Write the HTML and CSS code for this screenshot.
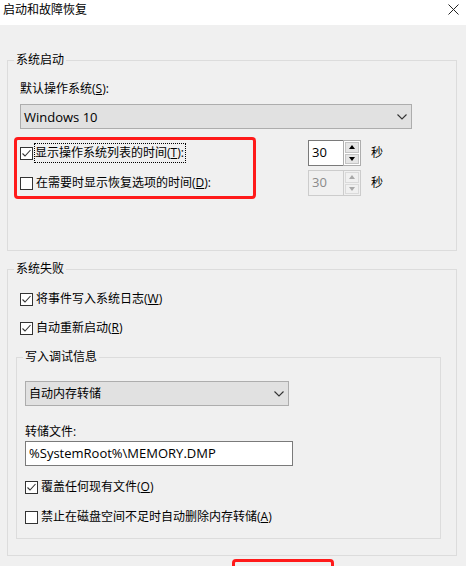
FILE: index.html
```html
<!DOCTYPE html>
<html lang="zh-CN">
<head>
<meta charset="utf-8">
<title>启动和故障恢复</title>
<link rel="stylesheet" href="styles.css">
</head>
<body>
<div class="titlebar">
  <span class="title">启动和故障恢复</span>
  <svg class="close" width="11" height="11" viewBox="0 0 11 11"><path d="M0.5 0.5L10.5 10.5M10.5 0.5L0.5 10.5" stroke="#222" stroke-width="1" fill="none"/></svg>
</div>
<div class="content">
  <fieldset class="group g1">
    <legend>系统启动</legend>
    <div class="label l-os">默认操作系统(<u>S</u>):</div>
    <div class="select sel-os"><span>Windows 10</span><svg class="chev" width="10" height="6" viewBox="0 0 10 6"><path d="M0.5 0.5L5 5L9.5 0.5" stroke="#333" stroke-width="1.1" fill="none"/></svg></div>
    <div class="timeouts">
      <div class="highlight">
        <div class="row trow">
          <span class="cb"><svg width="13" height="13" viewBox="0 0 13 13"><rect x="0.5" y="0.5" width="12" height="12" fill="#fff" stroke="#333"/><path d="M2.5 6.5L5 9L10.5 3" stroke="#333" stroke-width="1.1" fill="none"/></svg></span>
          <span class="text focus">显示操作系统列表的时间(<u>T</u>):</span>
        </div>
        <div class="row trow">
          <span class="cb"><svg width="13" height="13" viewBox="0 0 13 13"><rect x="0.5" y="0.5" width="12" height="12" fill="#fff" stroke="#333"/></svg></span>
          <span class="text">在需要时显示恢复选项的时间(<u>D</u>):</span>
        </div>
      </div>
      <div class="spins">
        <div class="spinrow">
          <div class="spin">
            <div class="spin-field">30</div>
            <div class="spin-btns"><div class="spin-btn"><i class="tri up"></i></div><div class="spin-btn"><i class="tri down"></i></div></div>
          </div>
          <span class="unit">秒</span>
        </div>
        <div class="spinrow">
          <div class="spin disabled">
            <div class="spin-field">30</div>
            <div class="spin-btns"><div class="spin-btn"><i class="tri up"></i></div><div class="spin-btn"><i class="tri down"></i></div></div>
          </div>
          <span class="unit">秒</span>
        </div>
      </div>
    </div>
  </fieldset>

  <fieldset class="group g2">
    <legend>系统失败</legend>
    <div class="row crow first">
      <span class="cb"><svg width="13" height="13" viewBox="0 0 13 13"><rect x="0.5" y="0.5" width="12" height="12" fill="#fff" stroke="#333"/><path d="M2.5 6.5L5 9L10.5 3" stroke="#333" stroke-width="1.1" fill="none"/></svg></span>
      <span class="text">将事件写入系统日志(<u>W</u>)</span>
    </div>
    <div class="row crow second">
      <span class="cb"><svg width="13" height="13" viewBox="0 0 13 13"><rect x="0.5" y="0.5" width="12" height="12" fill="#fff" stroke="#333"/><path d="M2.5 6.5L5 9L10.5 3" stroke="#333" stroke-width="1.1" fill="none"/></svg></span>
      <span class="text">自动重新启动(<u>R</u>)</span>
    </div>
    <fieldset class="group sub">
      <legend>写入调试信息</legend>
      <div class="select sel-dump"><span>自动内存转储</span><svg class="chev" width="10" height="6" viewBox="0 0 10 6"><path d="M0.5 0.5L5 5L9.5 0.5" stroke="#333" stroke-width="1.1" fill="none"/></svg></div>
      <div class="label l-file">转储文件:</div>
      <div class="textbox">%SystemRoot%\MEMORY.DMP</div>
      <div class="row crow over">
        <span class="cb"><svg width="13" height="13" viewBox="0 0 13 13"><rect x="0.5" y="0.5" width="12" height="12" fill="#fff" stroke="#333"/><path d="M2.5 6.5L5 9L10.5 3" stroke="#333" stroke-width="1.1" fill="none"/></svg></span>
        <span class="text">覆盖任何现有文件(<u>O</u>)</span>
      </div>
      <div class="row crow disable">
        <span class="cb"><svg width="13" height="13" viewBox="0 0 13 13"><rect x="0.5" y="0.5" width="12" height="12" fill="#fff" stroke="#333"/></svg></span>
        <span class="text">禁止在磁盘空间不足时自动删除内存转储(<u>A</u>)</span>
      </div>
    </fieldset>
  </fieldset>
  <div class="okmark"></div>
</div>
</body>
</html>
```

FILE: styles.css
```css
html, body {
  margin: 0;
  padding: 0;
}
body {
  width: 466px;
  height: 566px;
  overflow: hidden;
  background: #f0f0f0;
  color: #000;
  font-family: "Open Sans", "Noto Sans CJK SC", sans-serif;
  font-size: 12px;
  line-height: 16px;
}
u {
  text-decoration: underline;
  text-underline-offset: 1px;
}
.titlebar {
  box-sizing: border-box;
  height: 25px;
  background: #fff;
  display: flex;
  align-items: flex-start;
  justify-content: space-between;
  padding: 0 7px 0 3px;
}
.title {
  font-size: 12px;
  line-height: 16px;
  margin-top: 2px;
}
.close {
  display: block;
  margin-top: 4px;
}
.content {
  padding: 0 9px 0 7px;
}
.group {
  margin: 0;
  padding: 0;
  border: 1px solid #dcdcdc;
  min-width: 0;
}
.group legend {
  margin-left: 6px;
  padding: 0 2px;
  line-height: 16px;
}
.g1 {
  margin-top: 27px;
  padding-bottom: 51px;
}
.label {
  line-height: 16px;
}
.l-os {
  margin: 13px 0 0 12px;
}
.select {
  box-sizing: border-box;
  height: 25px;
  background: #e1e1e1;
  border: 1px solid #adadad;
  display: flex;
  align-items: center;
  justify-content: space-between;
  padding: 0 4px 0 3px;
}
.sel-os {
  width: 392px;
  margin: 7px 0 0 12px;
  font-size: 13px;
}
.timeouts {
  display: flex;
  margin: 8px 0 0 6px;
}
.highlight {
  box-sizing: border-box;
  width: 242px;
  border: 3px solid #ff1a1a;
  border-radius: 4px;
  padding: 0 0 0 3px;
  display: flex;
  flex-direction: column;
  gap: 4px;
}
.row {
  display: flex;
  align-items: center;
}
.trow {
  height: 26px;
}
.cb {
  width: 13px;
  height: 13px;
  flex: none;
  display: flex;
}
.text {
  margin-left: 3px;
  white-space: nowrap;
}
.focus {
  outline: 1px dotted #000;
  outline-offset: 0;
  padding: 1px 1px 1px 0;
  margin-left: 2px;
}
.spins {
  margin: 3px 0 0 52px;
  display: flex;
  flex-direction: column;
  gap: 4px;
}
.spinrow {
  display: flex;
  align-items: center;
  height: 26px;
}
.spin {
  display: flex;
  width: 53px;
  height: 26px;
}
.spin-field {
  box-sizing: border-box;
  width: 35px;
  border: 1px solid #7a7a7a;
  border-right: none;
  background: #fff;
  padding-left: 3px;
  line-height: 23px;
  font-size: 13px;
}
.spin-btns {
  box-sizing: border-box;
  width: 18px;
  border: 1px solid #adadad;
  background: #fff;
  display: flex;
  flex-direction: column;
  gap: 1px;
  padding: 1px;
}
.spin-btn {
  flex: 1;
  background: #e5e5e5;
  border: 1px solid #c4c4c4;
  display: flex;
  align-items: center;
  justify-content: center;
}
.tri {
  width: 0;
  height: 0;
  border-left: 3.5px solid transparent;
  border-right: 3.5px solid transparent;
}
.tri.up {
  border-bottom: 4px solid #000;
}
.tri.down {
  border-top: 4px solid #000;
}
.spin.disabled .spin-field {
  background: #f0f0f0;
  border-color: #cccccc;
  color: #8a8a8a;
}
.spin.disabled .spin-btns {
  border-color: #cccccc;
  background: #f0f0f0;
}
.spin.disabled .spin-btn {
  background: #f0f0f0;
  border-color: #dadada;
}
.spin.disabled .tri.up {
  border-bottom-color: #a8a8a8;
}
.spin.disabled .tri.down {
  border-top-color: #a8a8a8;
}
.unit {
  margin-left: 10px;
}
.g2 {
  margin-top: 10px;
  padding-bottom: 16px;
}
.crow {
  height: 20px;
  margin-left: 12px;
}
.crow.first {
  margin-top: 12px;
}
.crow.second {
  margin-top: 9px;
}
.sub {
  margin: 11px 15px 0 8px;
  padding-bottom: 11px;
}
.sel-dump {
  width: 264px;
  margin: 16px 0 0 8px;
}
.l-file {
  margin: 18px 0 0 8px;
}
.textbox {
  box-sizing: border-box;
  width: 268px;
  height: 25px;
  margin: 1px 0 0 8px;
  background: #fff;
  border: 1px solid #7a7a7a;
  padding-left: 3px;
  line-height: 23px;
  font-size: 13px;
}
.crow.over {
  margin: 11px 0 0 8px;
}
.crow.disable {
  margin: 10px 0 0 8px;
}
.okmark {
  box-sizing: border-box;
  width: 102px;
  height: 30px;
  margin: 3px 0 0 225px;
  border: 3px solid #ff1a1a;
  border-radius: 4px;
}
```
